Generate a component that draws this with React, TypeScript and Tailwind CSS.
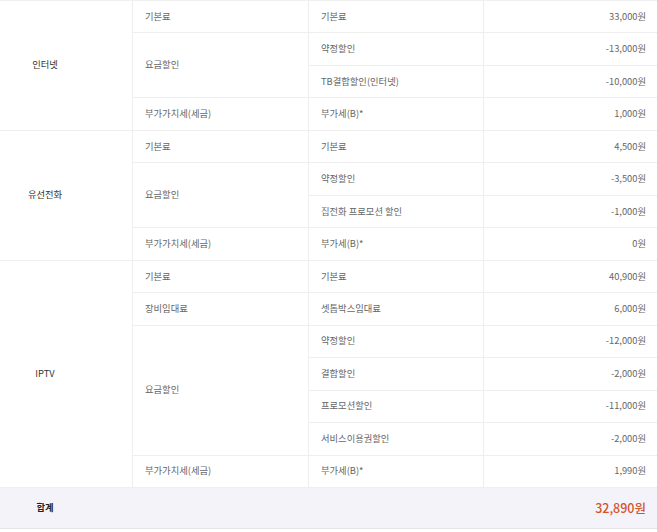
import React from "react";

type Item = { name: string; amount: string };
type Group = { label: string; items: Item[] };
type Section = { title: string; groups: Group[] };

const data: Section[] = [
  {
    title: "인터넷",
    groups: [
      { label: "기본료", items: [{ name: "기본료", amount: "33,000원" }] },
      {
        label: "요금할인",
        items: [
          { name: "약정할인", amount: "-13,000원" },
          { name: "TB결합할인(인터넷)", amount: "-10,000원" },
        ],
      },
      { label: "부가가치세(세금)", items: [{ name: "부가세(B)*", amount: "1,000원" }] },
    ],
  },
  {
    title: "유선전화",
    groups: [
      { label: "기본료", items: [{ name: "기본료", amount: "4,500원" }] },
      {
        label: "요금할인",
        items: [
          { name: "약정할인", amount: "-3,500원" },
          { name: "집전화 프로모션 할인", amount: "-1,000원" },
        ],
      },
      { label: "부가가치세(세금)", items: [{ name: "부가세(B)*", amount: "0원" }] },
    ],
  },
  {
    title: "IPTV",
    groups: [
      { label: "기본료", items: [{ name: "기본료", amount: "40,900원" }] },
      { label: "장비임대료", items: [{ name: "셋톱박스임대료", amount: "6,000원" }] },
      {
        label: "요금할인",
        items: [
          { name: "약정할인", amount: "-12,000원" },
          { name: "결합할인", amount: "-2,000원" },
          { name: "프로모션할인", amount: "-11,000원" },
          { name: "서비스이용권할인", amount: "-2,000원" },
        ],
      },
      { label: "부가가치세(세금)", items: [{ name: "부가세(B)*", amount: "1,990원" }] },
    ],
  },
];

const span: Record<number, string> = {
  1: "row-span-1",
  2: "row-span-2",
  4: "row-span-4",
  7: "row-span-7",
};

export default function App() {
  const cells: React.ReactNode[] = [];
  data.forEach((s, si) => {
    const rows = s.groups.reduce((a, g) => a + g.items.length, 0);
    s.groups.forEach((g, gi) => {
      g.items.forEach((it, ii) => {
        if (gi === 0 && ii === 0) {
          cells.push(
            <div
              key={`s${si}`}
              className={`${span[rows]} border-b border-[#eeeeee] flex items-center`}
            >
              <div className="w-[90px] text-center text-[#333]">{s.title}</div>
            </div>
          );
        }
        if (ii === 0) {
          cells.push(
            <div
              key={`g${si}-${gi}`}
              className={`${span[g.items.length]} border-b border-l border-[#eeeeee] flex items-center pl-[12px]`}
            >
              {g.label}
            </div>
          );
        }
        cells.push(
          <div
            key={`n${si}-${gi}-${ii}`}
            className="border-b border-l border-[#eeeeee] flex items-center pl-[12px]"
          >
            {it.name}
          </div>
        );
        cells.push(
          <div
            key={`a${si}-${gi}-${ii}`}
            className="border-b border-l border-[#eeeeee] flex items-center justify-end pr-[11px]"
          >
            {it.amount}
          </div>
        );
      });
    });
  });

  return (
    <div
      className="w-[657px] bg-white text-[9.3px] text-[#666]"
      style={{ fontFamily: '"Noto Sans CJK KR", "Noto Sans", sans-serif' }}
    >
      <div className="border-t border-[#f0f0f0]">
        <div className="grid grid-cols-[132px_176px_175px_174px] grid-rows-[repeat(15,32.47px)]">
          {cells}
        </div>
        <div className="flex h-[41px] bg-[#f4f3fa] border-b border-[#e6e6e6] items-center">
          <div className="w-[90px] text-center text-[#222] font-bold">합계</div>
          <div className="flex-1 text-right pr-[11px] text-[12.5px] text-[#d4542c] font-medium">
            32,890원
          </div>
        </div>
      </div>
    </div>
  );
}
